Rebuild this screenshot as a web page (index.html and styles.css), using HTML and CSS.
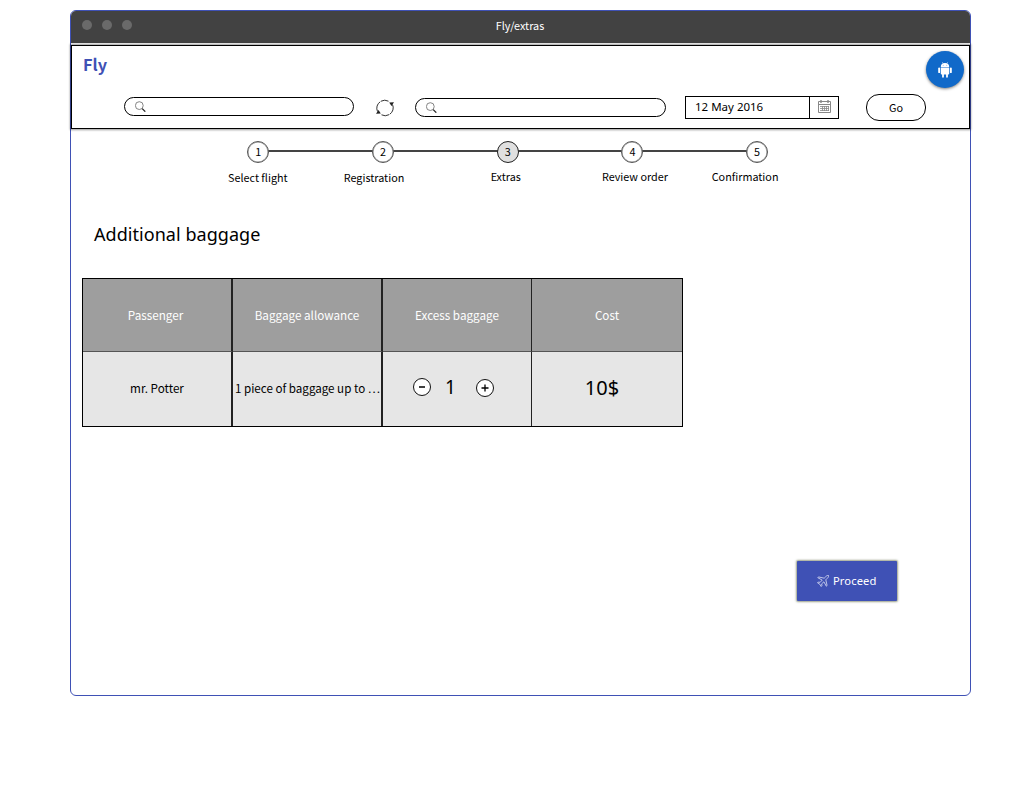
FILE: index.html
```html
<!DOCTYPE html>
<html lang="en">
<head>
<meta charset="utf-8">
<title>Fly/extras</title>
<link rel="stylesheet" href="styles.css">
</head>
<body>
<div class="window">
  <div class="titlebar">
    <div class="dots"><i class="dot"></i><i class="dot"></i><i class="dot"></i></div>
    <span class="title">Fly/extras</span>
  </div>
  <header class="header">
    <div class="brand">Fly</div>
    <div class="searchbar">
      <div class="search from">
        <svg class="magnifier" viewBox="0 0 11 11"><circle cx="4.3" cy="4.6" r="3.9" fill="none" stroke="#666" stroke-width=".8"/><path d="M7.2 7.6 10.3 10.6" stroke="#222" stroke-width="1.3"/></svg>
      </div>
      <svg class="swap" viewBox="0 0 18 18"><g fill="none" stroke="#333" stroke-width="1"><path d="M1.500 12.500A7.800 7.800 0 0 1 4.300 2.700"/><path d="M5 2.200A7.800 7.800 0 0 1 12.500 2.200"/><path d="M16.500 5.500A7.800 7.800 0 0 1 13.700 15.300"/><path d="M13 15.700A7.800 7.800 0 0 1 5.500 15.800"/></g><path d="M13.200 3.500 18 3.300 15.500 7ZM0 14.700 2.500 11 4.800 14.500Z" fill="#222"/></svg>
      <div class="search to">
        <svg class="magnifier" viewBox="0 0 11 11"><circle cx="4.3" cy="4.6" r="3.9" fill="none" stroke="#666" stroke-width=".8"/><path d="M7.2 7.6 10.3 10.6" stroke="#222" stroke-width="1.3"/></svg>
      </div>
      <div class="date">
        <span class="date-value">12 May 2016</span>
        <span class="date-picker"><svg class="calendar" viewBox="0 0 14 14"><g fill="none" stroke="#888"><path d="M.5 1.500h12v11H.5zM.5 4.500h12"/><path d="M3 0v3M10 0v3" stroke-width="1.400"/><path d="M2 6.500h9M2 8.500h9M2 10.500h9M4.500 6v5M6.500 6v5M8.500 6v5M10.500 6v5" stroke-width=".8"/></g></svg></span>
      </div>
      <button class="go">Go</button>
    </div>
    <div class="fab">
      <svg class="android" viewBox="0 0 14 16"><g fill="#fff"><path d="M2.800 5A4.200 4 0 0 1 11.200 5Z"/><path d="M2.800 5.600h8.400v6.200q0 .8-.8.8H9.900v2.200a.9.9 0 0 1-1.800 0v-2.200H5.900v2.200a.9.9 0 0 1-1.800 0v-2.200h-.5q-.8 0-.8-.8z"/><rect x=".2" y="5.500" width="1.900" height="5.600" rx=".95"/><rect x="11.900" y="5.500" width="1.900" height="5.600" rx=".95"/></g><path d="m4.300.2.9 1.500M9.700.2l-.9 1.500" stroke="#fff" stroke-width=".5"/><circle cx="5.200" cy="3.200" r=".4" fill="#1069c9"/><circle cx="8.800" cy="3.200" r=".4" fill="#1069c9"/></svg>
    </div>
  </header>
  <div class="steps">
    <div class="step s1"><span class="num">1</span><span class="label">Select flight</span></div>
    <div class="step s2"><span class="num">2</span><span class="label">Registration</span></div>
    <div class="step s3 current"><span class="num">3</span><span class="label">Extras</span></div>
    <div class="step s4"><span class="num">4</span><span class="label">Review order</span></div>
    <div class="step s5"><span class="num">5</span><span class="label">Confirmation</span></div>
  </div>
  <h1 class="heading">Additional baggage</h1>
  <div class="table">
    <div class="cell head passenger">Passenger</div>
    <div class="cell head">Baggage allowance</div>
    <div class="cell head">Excess baggage</div>
    <div class="cell head last">Cost</div>
    <div class="cell">mr. Potter</div>
    <div class="cell allowance">1 piece of baggage up to …</div>
    <div class="cell counter">
      <svg class="round minus" viewBox="0 0 18 18"><circle cx="9" cy="9" r="8.500" fill="#fff" stroke="#111"/><path d="M6 9h6" stroke="#000" stroke-width="1.500"/></svg>
      <span class="count">1</span>
      <svg class="round plus" viewBox="0 0 18 18"><circle cx="9" cy="9" r="8.500" fill="#fff" stroke="#111"/><path d="M5.500 9h7M9 5.500v7" stroke="#000" stroke-width="1.300"/></svg>
    </div>
    <div class="cell last cost">10$</div>
  </div>
  <button class="proceed">
    <svg class="plane" viewBox="0 0 12 12"><path d="M11.500.5C10.500.2 9.500.8 8.500 1.900L7.200 3.200 1.500 1.900.8 2.700 5.200 5.100 3.200 7.300 1.200 7.100.5 7.800 2.800 9.200 4.200 11.500 4.900 10.800 4.700 8.800 6.900 6.800 9.300 11.200 10.100 10.500 8.800 4.800 10.100 3.500C11.200 2.500 11.800 1.500 11.500.5Z" fill="none" stroke="#dfe2f5" stroke-width=".8"/></svg>
    <span class="proceed-text">Proceed</span>
  </button>
</div>
</body>
</html>
```
FILE: styles.css
```css
* { box-sizing: border-box; }
body { margin: 0; background: #fff; color: #000; font: 10.800px/16px "Noto Sans CJK SC", sans-serif; }
svg { display: block; flex: none; }
button { padding: 0; color: inherit; font: inherit; }
.window { width: 901px; height: 686px; margin: 10px 0 0 70px; border: 1px solid #3f51b5; border-radius: 6px; }
.titlebar { display: grid; grid-template-columns: 1fr auto 1fr; align-items: start; height: 32px; background: #424242; border-radius: 5px 5px 0 0; color: #fff; }
.dots { display: flex; gap: 10px; padding: 9px 0 0 10.500px; }
.dot { width: 10px; height: 10px; border-radius: 50%; background: #6a6a6a; }
.title { margin-top: 6px; margin-left: -1px; }
.header { position: relative; height: 84px; margin-top: 2px; border: 1px solid #000; box-shadow: 0 0 2px 1px rgba(0,0,0,.4); }
.brand { margin: 6px 0 0 11px; height: 24px; line-height: 24px; font-size: 16.300px; font-weight: 700; color: #3f51b5; }
.searchbar { display: flex; align-items: flex-start; margin: 18px 0 0 52px; }
.search { height: 19px; border: 1px solid #000; border-radius: 10px; padding: 3px 0 0 10px; }
.from { width: 230px; margin-top: 3px; }
.to { width: 251px; margin: 4px 0 0 21px; }
.magnifier { width: 11px; height: 11px; }
.swap { width: 18px; height: 18px; margin: 5px 0 0 22px; }
.date { display: flex; width: 154px; height: 23px; margin: 2px 0 0 19px; border: 1px solid #000; }
.date-value { flex: 1; padding-left: 9px; font: 400 11.500px/19px "Noto Sans", sans-serif; }
.date-picker { width: 29px; border-left: 1px solid #000; padding: 3px 0 0 8px; }
.calendar { width: 14px; height: 14px; }
.go { width: 60px; height: 27px; margin-left: 27px; padding-bottom: 2px; border: 1px solid #000; border-radius: 13px; background: #fff; }
.fab { position: absolute; top: 5px; right: 5px; display: grid; place-items: center; width: 38px; height: 37px; border-radius: 50%; background: #1069c9; box-shadow: 0 1px 3px rgba(0,0,0,.5); }
.android { width: 14px; height: 16px; }
.steps { display: flex; margin: 12px 0 0 125px; height: 48px; background: linear-gradient(#444, #444) 62px 9px / 499px 2px no-repeat; }
.step { display: grid; grid-template-rows: 22px 1fr; justify-items: center; width: 124.700px; }
.num { width: 22px; height: 22px; border: 1.500px solid #555; border-radius: 50%; background: #fff; text-align: center; line-height: 19px; box-shadow: inset 0 0 0 .5px #888; }
.current .num { background: #e0e0e0; border: 1px solid #222; box-shadow: none; }
.label { margin-top: 5px; white-space: nowrap; }
.s1 .label, .s2 .label { margin-top: 6px; }
.s1 .label { margin-right: 1px; }
.s2 .label { margin-right: 18px; }
.s3 .label { margin-right: 4px; }
.s4 .label { margin-left: 5px; }
.s5 .label { margin-right: 24px; }
.heading { margin: 32px 0 0 23px; font: 400 18px/26px "Noto Sans", sans-serif; letter-spacing: .05px; }
.table { display: grid; grid-template-columns: 150px 150px 149px 150px; grid-template-rows: 73px 74px; width: 601px; margin: 31px 0 0 11px; background: #e6e6e6; border: 1px solid #000; }
.cell { display: flex; align-items: center; justify-content: center; padding-bottom: 2px; border-right: 2px solid #222; font-size: 11.700px; white-space: nowrap; }
.cell:nth-child(4n+3) { border-right: 1px solid #222; }
.cell.last { border-right: 0; }
.head { padding-bottom: 0; background: #9e9e9e; color: #fff; border-bottom: 1px solid #555; }
.passenger { padding-right: 3px; }
.allowance { font-size: 11.600px; padding-left: 1px; }
.counter { justify-content: flex-start; padding: 0 0 3px 30px; }
.round { width: 18px; height: 18px; }
.plus { margin: 1px 0 0 21px; }
.minus { margin-top: -1px; }
.count { width: 10px; margin: -2px 0 0 14px; font: 400 19px/24px "Noto Sans", sans-serif; }
.cost { font: 400 20px/24px "Noto Sans", sans-serif; padding-right: 10px; }
.proceed { display: flex; align-items: center; width: 100px; height: 40px; margin: 134px 0 0 726px; padding-left: 20px; border: 0; border-radius: 1px; background: #3f51b5; box-shadow: 0 0 2px 1px rgba(70,80,40,.55); color: #fff; }
.plane { width: 12px; height: 12px; }
.proceed-text { margin-left: 4px; font: 400 11.200px/16px "Noto Sans", sans-serif; letter-spacing: .1px; }
```
